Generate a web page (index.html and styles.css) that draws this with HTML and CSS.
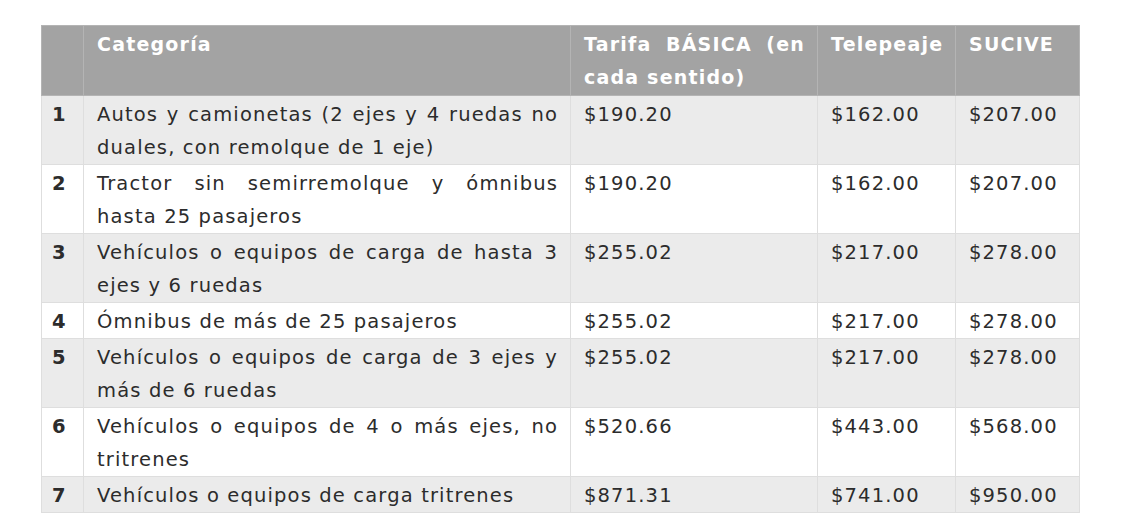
FILE: index.html
```html
<!DOCTYPE html>
<html lang="es">
<head>
<meta charset="utf-8">
<title>Tarifas</title>
<link rel="stylesheet" href="styles.css">
</head>
<body>
<div class="page">
<table class="tarifas">
  <colgroup>
    <col class="c-num"><col class="c-cat"><col class="c-tar"><col class="c-tel"><col class="c-suc">
  </colgroup>
  <thead>
    <tr>
      <th></th>
      <th>Categoría</th>
      <th class="just">Tarifa BÁSICA (en cada sentido)</th>
      <th>Telepeaje</th>
      <th>SUCIVE</th>
    </tr>
  </thead>
  <tbody>
    <tr class="alt"><td class="num">1</td><td class="cat">Autos y camionetas (2 ejes y 4 ruedas no duales, con remolque de 1 eje)</td><td>$190.20</td><td>$162.00</td><td>$207.00</td></tr>
    <tr><td class="num">2</td><td class="cat">Tractor sin semirremolque y ómnibus hasta 25 pasajeros</td><td>$190.20</td><td>$162.00</td><td>$207.00</td></tr>
    <tr class="alt"><td class="num">3</td><td class="cat">Vehículos o equipos de carga de hasta 3 ejes y 6 ruedas</td><td>$255.02</td><td>$217.00</td><td>$278.00</td></tr>
    <tr><td class="num">4</td><td class="cat">Ómnibus de más de 25 pasajeros</td><td>$255.02</td><td>$217.00</td><td>$278.00</td></tr>
    <tr class="alt"><td class="num">5</td><td class="cat">Vehículos o equipos de carga de 3 ejes y más de 6 ruedas</td><td>$255.02</td><td>$217.00</td><td>$278.00</td></tr>
    <tr><td class="num">6</td><td class="cat">Vehículos o equipos de 4 o más ejes, no tritrenes</td><td>$520.66</td><td>$443.00</td><td>$568.00</td></tr>
    <tr class="alt"><td class="num">7</td><td class="cat">Vehículos o equipos de carga tritrenes</td><td>$871.31</td><td>$741.00</td><td>$950.00</td></tr>
  </tbody>
</table>
</div>
</body>
</html>
```
FILE: styles.css
```css
html, body {
  margin: 0;
  padding: 0;
  background: #ffffff;
}
.page {
  padding: 25px 0 0 41px;
}
.tarifas {
  border-collapse: collapse;
  table-layout: fixed;
  width: 1038px;
  font-family: "DejaVu Sans", sans-serif;
  font-size: 19.5px;
  letter-spacing: 1.15px;
  line-height: 33px;
  color: #2c2c2c;
}
.c-num { width: 42px; }
.c-cat { width: 487px; }
.c-tar { width: 247px; }
.c-tel { width: 138px; }
.c-suc { width: 124px; }
.tarifas th,
.tarifas td {
  border: 1px solid #dedede;
  padding: 2px 12px 0 13px;
  vertical-align: top;
  text-align: left;
}
.tarifas th {
  background: #a3a3a3;
  color: #ffffff;
  font-weight: bold;
  font-size: 19px;
  letter-spacing: 1.2px;
  padding-top: 2px;
  padding-bottom: 1px;
  border-color: #b4b4b4;
  height: 63px;
}
.tarifas th.just,
.tarifas td.cat {
  text-align: justify;
}
.tarifas tr.alt td {
  background: #ebebeb;
}
.tarifas td.num {
  font-weight: bold;
  padding-left: 10px;
  padding-right: 4px;
}
```
